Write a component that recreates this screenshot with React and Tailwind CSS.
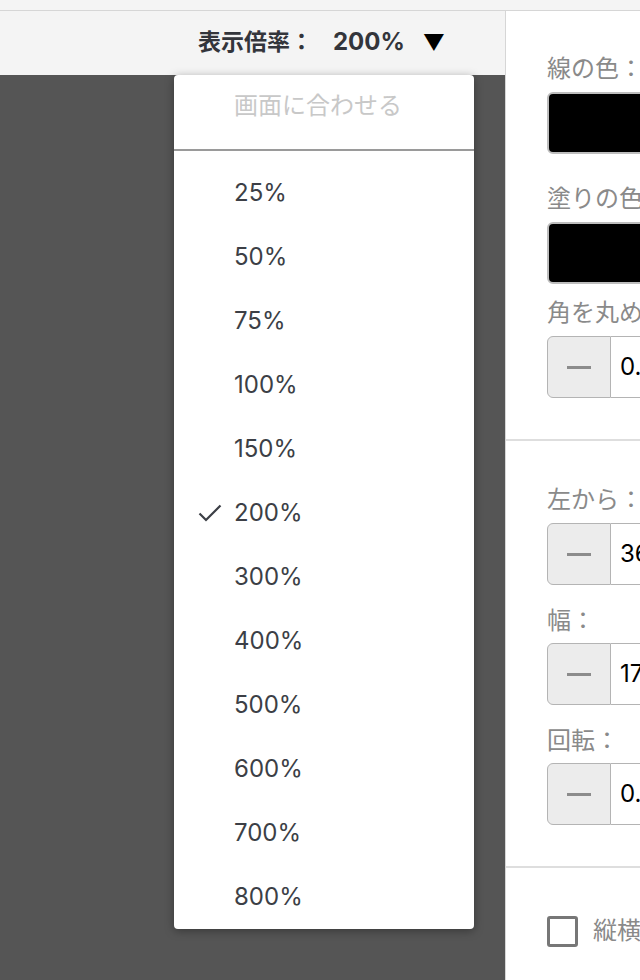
import React from "react";

const FONT = { fontFamily: 'Inter, "Noto Sans CJK JP", sans-serif' };

function Label({ children, className = "" }) {
  return (
    <div className={"h-[30px] leading-[30px] text-[24px] text-[#8a8a8a] whitespace-nowrap " + className}>
      {children}
    </div>
  );
}

function Stepper({ value, className = "" }) {
  return (
    <div className={"flex h-[62px] w-[200px] " + className}>
      <div className="w-[64px] h-full flex items-center justify-center bg-[#ececec] border border-[#b4b4b4] rounded-l-[6px]">
        <div className="w-[24px] h-[3px] bg-[#8c8c8c]" />
      </div>
      <div className="flex-1 h-full flex items-center pl-[9px] border-y border-r border-[#b4b4b4] text-[24px] text-black">
        {value}
      </div>
    </div>
  );
}

export default function App() {
  const items = ["25%", "50%", "75%", "100%", "150%", "200%", "300%", "400%", "500%", "600%", "700%", "800%"];
  return (
    <div className="w-[640px] h-[980px] flex flex-col overflow-hidden bg-white" style={FONT}>
      <div className="h-[11px] bg-[#f4f4f4] border-b border-[#d6d6d6] shrink-0" />
      <div className="flex flex-1 min-h-0">
        <div className="w-[505px] flex flex-col relative shrink-0">
          <div className="h-[64px] bg-[#f4f4f4] flex items-center justify-end pr-[60px] pb-[2px] shrink-0">
            <span className="text-[23px] font-bold text-[#33353b]">表示倍率：</span>
            <span className="text-[24px] font-bold text-[#33353b] ml-[20px]">200%</span>
            <span className="text-[22px] text-black ml-[18px]">▼</span>
          </div>
          <div className="flex-1 bg-[#555555]" />
          <div className="absolute left-[174px] top-[64px] w-[300px] bg-white rounded-[4px] shadow-[0_2px_10px_rgba(0,0,0,0.35)]">
            <div className="h-[74px] pt-[13px] pl-[60px] text-[24px] leading-[36px] text-[#c8c8c8]">画面に合わせる</div>
            <div className="h-[2px] bg-[#9a9a9a]" />
            <div className="pt-[10px]">
              {items.map((it) => (
                <div key={it} className="h-[64px] flex items-center relative pl-[60px] text-[24px] text-[#3c3f46]">
                  {it === "200%" && (
                    <svg className="absolute left-[24px] top-[23px]" width="24" height="18" viewBox="0 0 24 18" fill="none">
                      <path d="M1.5 9.5 L8 16 L22.5 1.5" stroke="#3c3f46" strokeWidth="2.2" />
                    </svg>
                  )}
                  {it}
                </div>
              ))}
            </div>
          </div>
        </div>
        <div className="flex-1 border-l border-[#d6d6d6] bg-white overflow-hidden">
          <div className="w-[300px] pl-[41px]">
            <Label className="mt-[43px]">線の色：</Label>
            <div className="mt-[8px] h-[62px] w-[200px] bg-black rounded-[6px] border-2 border-[#bdbdbd]" />
            <Label className="mt-[30px]">塗りの色：</Label>
            <div className="mt-[8px] h-[62px] w-[200px] bg-black rounded-[6px] border-2 border-[#bdbdbd]" />
            <Label className="mt-[14px]">角を丸める：</Label>
            <Stepper value="0." className="mt-[8px]" />
          </div>
          <div className="mt-[41px] h-[2px] bg-[#dedede]" />
          <div className="w-[300px] pl-[41px]">
            <Label className="mt-[44px]">左から：</Label>
            <Stepper value="36" className="mt-[8px]" />
            <Label className="mt-[21px]">幅：</Label>
            <Stepper value="17" className="mt-[7px]" />
            <Label className="mt-[21px]">回転：</Label>
            <Stepper value="0." className="mt-[7px]" />
          </div>
          <div className="mt-[41px] h-[2px] bg-[#dedede]" />
          <div className="w-[300px] pl-[41px] mt-[45px] flex items-center">
            <div className="w-[31px] h-[31px] border-[3px] border-[#777] rounded-[3px] bg-white shrink-0" />
            <span className="ml-[15px] text-[24px] text-[#8a8a8a] whitespace-nowrap">縦横比を固定</span>
          </div>
        </div>
      </div>
    </div>
  );
}
